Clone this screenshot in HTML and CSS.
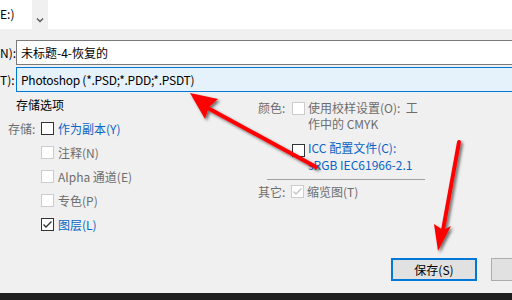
FILE: index.html
```html
<!DOCTYPE html>
<html lang="zh">
<head>
<meta charset="utf-8">
<link rel="stylesheet" href="styles.css">
</head>
<body>
<div class="page">
  <div class="top">
    <div class="drive">E:)</div>
    <div class="chev"><svg width="16" height="29" viewBox="0 0 16 29"><path d="M5 18.5 L8 21.5 L11 18.5" fill="none" stroke="#555" stroke-width="1.3"/></svg></div>
    <div class="fill"></div>
  </div>
  <div class="main">
    <div class="field"><span class="flabel">N):</span><div class="input">未标题-4-恢复的</div></div>
    <div class="field second"><span class="flabel">T):</span><div class="input sel">Photoshop (*.PSD;*.PDD;*.PSDT)</div></div>
    <div class="opts">
      <div class="col left">
        <div class="title">存储选项</div>
        <div class="row"><span class="lab">存储:</span><span class="cb"></span><span class="txt blue">作为副本(Y)</span></div>
        <div class="row"><span class="lab"></span><span class="cb dis"></span><span class="txt gray">注释(N)</span></div>
        <div class="row"><span class="lab"></span><span class="cb dis"></span><span class="txt gray">Alpha 通道(E)</span></div>
        <div class="row"><span class="lab"></span><span class="cb dis"></span><span class="txt gray">专色(P)</span></div>
        <div class="row"><span class="lab"></span><span class="cb on"><svg width="11" height="11" viewBox="0 0 11 11"><path d="M1.5 5.5 L4 8 L9.5 2.5" fill="none" stroke="#333" stroke-width="1.4"/></svg></span><span class="txt blue">图层(L)</span></div>
      </div>
      <div class="col right">
        <div class="rrow r1"><span class="lab">颜色:</span><span class="cb dis"></span><span class="txt gray">使用校样设置(O):&nbsp;&nbsp;工<br>作中的 CMYK</span></div>
        <div class="rrow r2"><span class="lab"></span><span class="cb"></span><span class="txt blue">ICC 配置文件(C):<br>sRGB IEC61966-2.1</span></div>
        <div class="sep"></div>
        <div class="rrow r3"><span class="lab">其它:</span><span class="cb dis"><svg width="11" height="11" viewBox="0 0 11 11"><path d="M1.5 5.5 L4 8 L9.5 2.5" fill="none" stroke="#c4c4c4" stroke-width="1.4"/></svg></span><span class="txt gray">缩览图(T)</span></div>
      </div>
    </div>
    <div class="buttons">
      <div class="btn primary">保存(S)</div>
      <div class="btn"></div>
    </div>
  </div>
  <div class="taskbar"></div>
  <svg class="arrows" width="512" height="300" viewBox="0 0 512 300">
    <defs>
      <filter id="sh" x="-20%" y="-20%" width="140%" height="140%">
        <feDropShadow dx="2" dy="2" stdDeviation="1.6" flood-color="#000" flood-opacity="0.55"/>
      </filter>
    </defs>
    <g filter="url(#sh)" fill="#f00">
      <path d="M316 167 L206 107" stroke="#f00" stroke-width="4" stroke-linecap="round"/>
      <path d="M190 93 L218 99 L209 107 L205 119 Z"/>
      <path d="M459 142 L443 230" stroke="#f00" stroke-width="4" stroke-linecap="round"/>
      <path d="M438 251 L434 224 L443 230 L451 226 Z"/>
    </g>
  </svg>
</div>
</body>
</html>
```

FILE: styles.css
```css
* { box-sizing: border-box; margin: 0; padding: 0; }
html, body { width: 512px; height: 300px; overflow: hidden; }
body {
  font-family: "Noto Sans CJK SC", "Noto Sans", sans-serif;
  font-size: 12px;
  color: #000;
  background: #f0f0f0;
}
.page { position: relative; width: 512px; height: 300px; }

.top { display: flex; height: 29px; background: #fff; }
.drive { width: 32px; height: 29px; line-height: 28px; }
.chev { width: 16px; background: #f0f0f0; }
.fill { flex: 1; background: #fff; }

.main { height: 264px; }
.field { display: flex; height: 25px; margin-top: 11px; }
.field.second { margin-top: 2px; }
.flabel { width: 16px; line-height: 25px; }
.input {
  flex: 1;
  border: 1px solid #7a7a7a;
  border-right: none;
  background: #fff;
  line-height: 23px;
  padding-left: 4px;
}
.input.sel { border-color: #0078d7; background: #e5f1fb; letter-spacing: -0.25px; }

.opts { display: flex; height: 145px; }
.col.left { width: 258px; }
.col.right { flex: 1; }

.title { padding-left: 16px; line-height: 16px; margin-top: 5px; margin-bottom: 3px; }
.row { display: flex; align-items: center; height: 24px; padding-left: 8px; }
.row .lab { width: 33px; color: #6d6d6d; }
.row .txt { margin-left: 4px; }

.cb {
  width: 13px; height: 13px; flex: none;
  border: 1px solid #333;
  background: #fff;
  display: flex; align-items: center; justify-content: center;
}
.cb.dis { border-color: #cccccc; }
.blue { color: #0a64c8; }
.gray { color: #6d6d6d; }

.rrow { display: flex; align-items: flex-start; }
.rrow .lab { width: 34px; color: #6d6d6d; line-height: 16px; }
.rrow .txt { margin-left: 3px; line-height: 16px; }
.r1 { margin-top: 8px; }
.r1 .cb { margin-top: 2px; }
.r2 { margin-top: 7px; }
.r2 .txt { line-height: 17px; }
.r2 .cb { margin-top: 5px; }
.sep { margin: 6px 0 0 9px; width: 158px; height: 1px; background: #a0a0a0; }
.r3 { margin-top: 4px; }
.r3 .cb { margin-top: 1px; }
.r3 .lab { width: 33px; }

.buttons { display: flex; padding-left: 391px; margin-top: 21px; gap: 14px; overflow: hidden; }
.btn {
  flex: none;
  height: 23px; width: 86px;
  background: #e1e1e1;
  border: 1px solid #adadad;
  text-align: center;
  line-height: 21px;
}
.btn.primary { border: 2px solid #0078d7; line-height: 19px; }

.taskbar { position: absolute; left: 0; top: 293px; width: 512px; height: 7px; background: #1e1e1e; }
.arrows { position: absolute; left: 0; top: 0; pointer-events: none; }
```
